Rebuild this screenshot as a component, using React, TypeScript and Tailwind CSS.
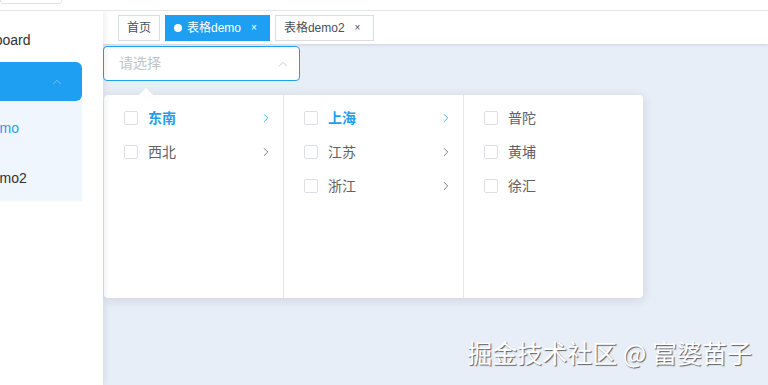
import { ChevronRight, ChevronUp } from 'lucide-react'

const font = { fontFamily: '"Liberation Sans", "Noto Sans CJK SC", sans-serif' }

interface Opt {
  label: string
  active?: boolean
  children?: boolean
}

const cols: Opt[][] = [
  [{ label: '东南', active: true, children: true }, { label: '西北', children: true }],
  [
    { label: '上海', active: true, children: true },
    { label: '江苏', children: true },
    { label: '浙江', children: true },
  ],
  [{ label: '普陀' }, { label: '黄埔' }, { label: '徐汇' }],
]

function Tag({ label, active, closable }: { label: string; active?: boolean; closable?: boolean }) {
  return (
    <div
      className={
        active
          ? 'flex h-[26px] items-center border border-[#1f9ff1] bg-[#1f9ff1] pl-[8px] pr-[12px] text-[12px] text-white'
          : closable
            ? 'flex h-[26px] items-center border border-[#d8dce5] bg-white pl-[8px] pr-[13px] text-[12px] text-[#495060]'
            : 'flex h-[26px] items-center border border-[#d8dce5] bg-white px-[8px] text-[12px] text-[#495060]'
      }
    >
      {active && <span className="mr-[5px] h-[8px] w-[8px] rounded-full bg-white" />}
      <span>{label}</span>
      {closable && <span className="ml-[10px] text-[10px] leading-none">×</span>}
    </div>
  )
}

function Column({ items, last }: { items: Opt[]; last?: boolean }) {
  return (
    <div className={last ? 'w-[179px] py-[6px]' : 'w-[180px] border-r border-[#e4e7ed] py-[6px]'}>
      {items.map((o) => (
        <div key={o.label} className="flex h-[34px] items-center pl-[20px] pr-[10px]">
          <span className="h-[14px] w-[14px] rounded-[2px] border border-[#dcdfe6] bg-white" />
          <span
            className={
              o.active
                ? 'ml-[10px] flex-1 text-[14px] font-bold text-[#1f9ff1]'
                : 'ml-[10px] flex-1 text-[14px] text-[#606266]'
            }
          >
            {o.label}
          </span>
          {o.children && (
            <ChevronRight
              size={14}
              strokeWidth={1.4}
              className={o.active ? 'text-[#1f9ff1]' : 'text-[#606266]'}
            />
          )}
        </div>
      ))}
    </div>
  )
}

export default function App() {
  return (
    <div className="flex h-[385px] w-[768px] flex-col overflow-hidden bg-white" style={font}>
      {/* header, mostly scrolled off */}
      <div className="flex h-[11px] shrink-0 border-b border-[#e6e6e6] bg-white">
        <div className="-mt-[20px] h-[24px] w-[62px] rounded-[3px] border border-[#e4e4e4]" />
      </div>

      <div className="flex flex-1 overflow-hidden">
        {/* sidebar */}
        <div className="relative z-10 w-[103px] shrink-0 overflow-hidden bg-white shadow-[2px_0_6px_rgba(0,21,41,0.08)]">
          <div className="w-[82px]">
            <div className="flex h-[51px] items-center pt-[8px]">
              <span className="-ml-[38px] text-[14px] text-[#303133]">Dashboard</span>
            </div>
            <div className="flex h-[39px] items-center justify-end rounded-r-[6px] bg-[#1f9ff1] pr-[18px]">
              <ChevronUp size={14} strokeWidth={1.5} className="text-[#7cc4f5]" />
            </div>
            <div className="bg-[#f0f6fe]">
              <div className="flex h-[50px] items-center pt-[4px]">
                <span className="-ml-[44px] text-[14px] text-[#1f9ff1]">表格demo</span>
              </div>
              <div className="flex h-[50px] items-center pt-[4px]">
                <span className="-ml-[44px] text-[14px] text-[#303133]">表格demo2</span>
              </div>
            </div>
          </div>
        </div>

        {/* main */}
        <div className="relative flex flex-1 flex-col bg-[#e8eef8]">
          <div className="flex h-[33px] shrink-0 items-center gap-[5px] bg-white pl-[15px] shadow-[0_1px_3px_rgba(0,0,0,0.12)]">
            <Tag label="首页" />
            <Tag label="表格demo" active closable />
            <Tag label="表格demo2" closable />
          </div>

          <div className="mt-[2px] flex h-[35px] w-[197px] items-center justify-between rounded-[4px] border border-[#1f9ff1] bg-white pl-[15px] pr-[9px]">
            <span className="text-[14px] text-[#c0c4cc]">请选择</span>
            <ChevronUp size={14} strokeWidth={1.5} className="text-[#c0c4cc]" />
          </div>

          {/* cascader dropdown */}
          <div className="absolute left-[1px] top-[84px] flex h-[203px] rounded-[4px] bg-white shadow-[0_2px_12px_rgba(0,0,0,0.12)]">
            <div className="absolute -top-[5px] left-[37px] h-[10px] w-[10px] rotate-45 bg-white" />
            <Column items={cols[0]} />
            <Column items={cols[1]} />
            <Column items={cols[2]} last />
          </div>

          <div
            className="absolute bottom-[14px] right-[16px] text-[25px] text-white [text-shadow:1px_1px_1px_rgba(0,0,0,0.6)]"
            style={{ fontFamily: '"Noto Sans CJK SC", sans-serif' }}
          >
            掘金技术社区 @ 富婆苗子
          </div>
        </div>
      </div>
    </div>
  )
}
